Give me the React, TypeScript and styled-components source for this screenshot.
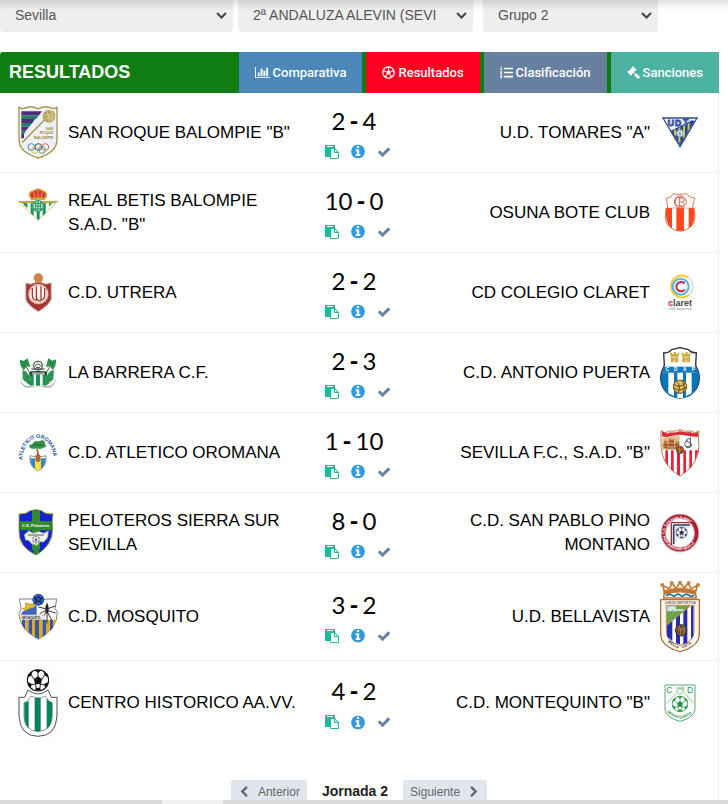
import React from "react";
import styled, { createGlobalStyle } from "styled-components";
import { FaListOl, FaRegFutbol } from "react-icons/fa";

const GlobalStyle = createGlobalStyle`
  *, *::before, *::after { box-sizing: border-box; }
  body {
    margin: 0;
    background: #fff;
    color: #000;
    font-family: "Liberation Sans", Arial, sans-serif;
  }
`;

const Page = styled.div`
  min-height: 100vh;
  display: flex;
  flex-direction: column;
`;

const TopShade = styled.div`
  position: fixed;
  inset: 0 0 auto 0;
  height: 10px;
  background: linear-gradient(rgba(0, 0, 0, 0.12), rgba(0, 0, 0, 0));
  pointer-events: none;
`;

const Filters = styled.form`
  display: grid;
  grid-template-columns: 233fr 240fr 175fr;
  gap: 5px;
  padding-right: 70px;
  margin-bottom: 20px;
`;

const FilterBox = styled.label<{ $gapEnd?: number }>`
  position: relative;
  display: block;
  margin-right: ${(p) => p.$gapEnd ?? 0}px;
`;

const FilterSelect = styled.select`
  appearance: none;
  display: block;
  width: 100%;
  height: 32px;
  padding: 0 36px 2px 15px;
  border: 0;
  border-radius: 0 0 4px 4px;
  background: #eee;
  color: #555;
  font: 14px "Liberation Sans", Arial, sans-serif;
`;

const FilterArrow = styled.svg`
  position: absolute;
  right: 6px;
  top: 12px;
  width: 11px;
  height: 7px;
  fill: none;
  stroke: #444;
  stroke-width: 2;
  pointer-events: none;
`;

const Panel = styled.main`
  flex: 1;
  display: flex;
  flex-direction: column;
  margin-right: 9px;
`;

const PanelHeader = styled.header`
  display: flex;
  height: 41px;
  background: #0f7d12;
  border-top-left-radius: 3px;
`;

const PanelTitle = styled.h1`
  flex: 1;
  margin: 0;
  padding-left: 9px;
  color: #fff;
  font-size: 18px;
  line-height: 40px;
`;

const Tabs = styled.nav`
  display: flex;
  gap: 4px;
`;

const Tab = styled.a<{ $color: string }>`
  display: flex;
  align-items: center;
  gap: 3px;
  padding: 0 16px;
  background: ${(p) => p.$color};
  color: #fff;
  font: 500 13px Roboto, sans-serif;
  text-decoration: none;
  white-space: nowrap;
`;

const PanelBody = styled.div`
  flex: 1;
  display: flex;
  flex-direction: column;
  border-right: 1px solid #eee;
`;

const MatchList = styled.ul`
  margin: 0;
  padding: 0;
  list-style: none;
`;

const MatchRow = styled.li`
  display: grid;
  grid-template-columns: 68px 1fr 110px 1fr 68px;
  align-items: center;
  min-height: 80px;
  padding: 8px 0;
  border-bottom: 1px solid #eee;
  &:last-child { border-bottom: 0; }
`;

const CrestCell = styled.div`
  display: flex;
  justify-content: center;
  width: 40px;
  margin: 0 auto 0 18px;
  svg { overflow: visible; }
`;

const CrestCellAway = styled(CrestCell)`
  margin-left: 10px;
`;

const TeamName = styled.div<{ $away?: boolean }>`
  font-size: 17px;
  line-height: 24px;
  text-align: ${(p) => (p.$away ? "right" : "left")};
`;

const ScoreCell = styled.div`
  display: flex;
  flex-direction: column;
  align-items: center;
  gap: 8px;
`;

const Score = styled.div`
  display: flex;
  gap: 4px;
  padding-right: 10px;
  font: 24px/30px Lato, sans-serif;
  b { font-weight: 900; }
`;

const Actions = styled.div`
  display: flex;
  gap: 10px;
  padding-right: 2px;
`;

const ActionButton = styled.button<{ $color: string }>`
  display: flex;
  align-items: center;
  justify-content: center;
  width: 16px;
  height: 16px;
  padding: 0;
  border: 0;
  background: none;
  color: ${(p) => p.$color};
  cursor: pointer;
`;

const Pager = styled.nav`
  display: flex;
  align-items: flex-start;
  justify-content: center;
  gap: 15px;
  margin-top: auto;
`;

const PagerButton = styled.button`
  display: flex;
  align-items: center;
  gap: 8px;
  height: 24px;
  padding: 0 7px;
  border: 0;
  border-radius: 3px 3px 0 0;
  background: #e1e6ee;
  color: #666;
  font: 12px "Liberation Sans", Arial, sans-serif;
`;

const PagerLabel = styled.strong`
  color: #222;
  font-size: 14px;
  line-height: 22px;
`;

const BottomTrack = styled.div`
  position: fixed;
  inset: auto 0 0 0;
  display: grid;
  grid-template-columns: 162fr 61fr 505fr;
  height: 4px;
  background: #dadada;
`;

const BottomGap = styled.span`
  grid-column: 2;
  background: #f1f1f1;
`;

type GlyphProps = { d: string; size: number; wide?: boolean };

const Glyph = ({ d, size, wide }: GlyphProps) => (
  <svg
    width={wide ? Math.round((size * 8) / 7) : size}
    height={size}
    viewBox={wide ? "0 0 2048 1792" : "0 0 1792 1792"}
    fill="currentColor"
    aria-hidden="true"
  >
    <path d={d} />
  </svg>
);

const CHART =
  "M640 896v512h-256v-512h256zm384-512v1024h-256v-1024h256zm1024 1152v128h-2048v-1536h128v1408h1920zm-640-896v768h-256v-768h256zm384-384v1152h-256v-1152h256z";
const GAVEL =
  "M1771 1536q0 53-37 90l-107 108q-39 37-91 37-53 0-90-37l-363-364q-38-36-38-90 0-53 43-96l-256-256-126 126q-14 14-34 14t-34-14q2 2 12.5 12t12.5 13 10 11.5 10 13.5 6 13.5 5.5 16.5 1.5 18q0 38-28 68-3 3-16.5 18t-19 20.5-18.5 16.5-22 15.5-22 9-26 4.5q-40 0-68-28l-408-408q-28-28-28-68 0-13 4.5-26t9-22 15.5-22 16.5-18.5 20.5-19 18-16.5q30-28 68-28 10 0 18 1.5t16.5 5.5 13.5 6 13.5 10 11.5 10 13 12.5 12 12.5q-14-14-14-34t14-34l348-348q14-14 34-14t34 14q-2-2-12.5-12t-12.5-13-10-11.5-10-13.5-6-13.5-5.5-16.5-1.5-18q0-38 28-68 3-3 16.5-18t19-20.5 18.5-16.5 22-15.5 22-9 26-4.5q40 0 68 28l408 408q28 28 28 68 0 13-4.5 26t-9 22-15.5 22-16.5 18.5-20.5 19-18 16.5q-30 28-68 28-10 0-18-1.5t-16.5-5.5-13.5-6-13.5-10-11.5-10-13-12.5-12-12.5q14 14 14 34t-14 34l-126 126 256 256q43-43 96-43 52 0 91 37l363 363q37 39 37 91z";
const PASTE =
  "M768 1664h896v-640h-416q-40 0-68-28t-28-68v-416h-384v1152zm256-1440v-64q0-13-9.5-22.5t-22.5-9.5h-704q-13 0-22.5 9.5t-9.5 22.5v64q0 13 9.5 22.5t22.5 9.5h704q13 0 22.5-9.5t9.5-22.5zm256 672h299l-299-299v299zm512 128v672q0 40-28 68t-68 28h-960q-40 0-68-28t-28-68v-160h-544q-40 0-68-28t-28-68v-1344q0-40 28-68t68-28h1088q40 0 68 28t28 68v328q21 13 36 28l408 408q28 28 48 76t20 88z";
const INFO =
  "M1152 1376v-160q0-14-9-23t-23-9h-96v-512q0-14-9-23t-23-9h-320q-14 0-23 9t-9 23v160q0 14 9 23t23 9h96v320h-96q-14 0-23 9t-9 23v160q0 14 9 23t23 9h448q14 0 23-9t9-23zm-128-896v-160q0-14-9-23t-23-9h-192q-14 0-23 9t-9 23v160q0 14 9 23t23 9h192q14 0 23-9t9-23zm640 416q0 209-103 385.5t-279.5 279.5-385.5 103-385.5-103-279.5-279.5-103-385.5 103-385.5 279.5-279.5 385.5-103 385.5 103 279.5 279.5 103 385.5z";
const CHECK =
  "M1671 566q0 40-28 68l-724 724-136 136q-28 28-68 28t-68-28l-136-136-362-362q-28-28-28-68t28-68l136-136q28-28 68-28t68 28l294 295 656-657q28-28 68-28t68 28l136 136q28 28 28 68z";
const CHEVRON_LEFT =
  "M1427 301l-531 531 531 531q19 19 19 45t-19 45l-166 166q-19 19-45 19t-45-19l-742-742q-19-19-19-45t19-45l742-742q19-19 45-19t45 19l166 166q19 19 19 45t-19 45z";
const CHEVRON_RIGHT =
  "M1363 877l-742 742q-19 19-45 19t-45-19l-166-166q-19-19-19-45t19-45l531-531-531-531q-19-19-19-45t19-45l166-166q19-19 45-19t45 19l742 742q19 19 19 45t-19 45z";

/* Every crest is drawn on a grid of three units per pixel. */
const Crest = ({ w, h, children }: { w: number; h: number; children: React.ReactNode }) => (
  <svg width={w} height={h} viewBox={`0 0 ${w * 3} ${h * 3}`} fill="none" aria-hidden="true">
    {children}
  </svg>
);

const Ball = ({ x, y, r, fill = "#fff", ink = "#111" }: { x: number; y: number; r: number; fill?: string; ink?: string }) => (
  <g transform={`translate(${x} ${y}) scale(${r / 30})`}>
    <circle r="29" fill={fill} stroke={ink} strokeWidth="3" />
    <path
      fill={ink}
      stroke={ink}
      strokeWidth="1"
      d="M0-11 11-3 7 10H-7L-11-3ZM-9-28H9L0-20ZM-28-8-18-14-16-24-26-17ZM28-8 18-14 16-24 26-17ZM-20 20-17 10-27 6-26 14ZM20 20 17 10 27 6 26 14ZM-8 27-5 21H5L8 27Z"
    />
    <path stroke={ink} strokeWidth="2.5" d="M0-11V-20M11-3 18-14M-11-3-18-14M7 10 17 12M-7 10-17 12M-5 21-7 10M5 21 7 10" />
  </g>
);

const SanRoque = () => (
  <Crest w={40} h={53}>
    <path d="M3 4Q14 11 24 5Q38 0 49 4L60 8L71 4Q84 0 96 5Q107 10 117 4V103Q116 139 61 156Q4 140 3 103Z" fill="#edf1f7" stroke="#a59446" strokeWidth="4" />
    <path d="M10 16H72L63 28H10ZM10 39H51L43 51H10ZM10 62H33L24 74H10ZM10 84H18V97H10Z" fill="#4f2c7a" />
    <path d="M10 28H63L54 39H10ZM10 51H43L34 62H10ZM10 74H24L18 84H10Z" fill="#28796b" />
    <path d="M106 15 12 110" stroke="#a59446" strokeWidth="4" />
    <circle cx="93" cy="31" r="19" fill="#b5a359" />
    <path d="M77 31Q92 19 110 33M80 41Q92 27 107 45M86 16Q97 31 93 49M98 13Q107 28 101 45" stroke="#ede4b9" strokeWidth="2" />
    <g fill="#9d8b43" fontFamily="Liberation Sans" fontWeight="700" fontSize="11">
      <text x="83" y="71">SAN</text><text x="65" y="85">ROQUE</text><text x="48" y="99">BALOMPIE</text>
    </g>
    <g strokeWidth="2.5">
      <circle cx="40" cy="123" r="10" stroke="#2b6cb5" /><circle cx="61" cy="123" r="10" stroke="#333" />
      <circle cx="82" cy="123" r="10" stroke="#d65049" /><circle cx="51" cy="132" r="10" stroke="#d9b346" />
      <circle cx="72" cy="132" r="10" stroke="#369558" />
    </g>
  </Crest>
);

const Betis = () => (
  <Crest w={40} h={49}>
    <path d="M1 40H119L60 97Z" fill="#fff" stroke="#c6a142" strokeWidth="2" />
    <path d="M12 42H28V60L20 53ZM38 42H47V84L38 75ZM56 42H65V92L60 96L56 90ZM74 42H83V75L74 84ZM93 42H106L93 56Z" fill="#169456" />
    <path d="M2 39H118L111 46H9Z" fill="#c1a54a" />
    <circle cx="60" cy="54" r="18" fill="#fff" />
    <circle cx="60" cy="54" r="16" fill="#ddf2df" stroke="#159455" strokeWidth="4" />
    <path d="M49 46H71M49 54H71M49 63H71M53 43V66M60 40V68M67 43V66" stroke="#159455" strokeWidth="3" />
    <path d="M41 34Q25 12 48 8Q60 0 72 8Q94 13 79 34Z" fill="#d83a2e" stroke="#cfa63d" strokeWidth="4" />
    <path d="M60 4V29M46 12Q52 20 49 30M74 12Q68 20 71 30" stroke="#e7c45a" strokeWidth="2" />
    <path d="M40 31Q60 25 80 31V37Q60 32 40 37Z" fill="#d1a941" />
    <path d="M60 0V7M56 3H64" stroke="#b98e2e" strokeWidth="2" />
  </Crest>
);

const Utrera = () => (
  <Crest w={27} h={39}>
    <circle cx="40" cy="15" r="14" fill="#d38245" />
    <path d="M3 31 18 34 40 27 63 34 78 30V78Q72 96 40 115Q8 96 3 78Z" fill="#a63632" stroke="#bd8067" strokeWidth="3" />
    <circle cx="40" cy="63" r="31" fill="#fff5f1" stroke="#a34340" strokeWidth="2" />
    <circle cx="40" cy="63" r="27" stroke="#cf8b79" strokeWidth="2" />
    <path d="M22 45V67Q23 83 34 81V45M34 40V70Q36 88 48 82V40M48 45V81Q60 79 59 64V45" stroke="#a93835" strokeWidth="4" />
  </Crest>
);

const Barrera = () => (
  <Crest w={38} h={30}>
    <path d="M9 34 33 24 57 8 82 23 106 33 101 56 110 69 97 86 71 88 57 78 43 88 17 86 4 73 14 55Z" fill="#fafbf9" stroke="#a2b3a2" strokeWidth="2" />
    <path d="M2 5 14 9 26 1 34 27 23 24 14 36 5 24ZM112 4 101 9 88 1 81 27 93 23 101 35 109 24Z" fill="#279149" />
    <path d="M11 8 50 76M104 6 64 76" stroke="#397847" strokeWidth="3" />
    <path d="M12 36Q24 40 29 52L43 58V82Q27 83 22 72Q7 70 12 36ZM103 35Q89 41 85 52L72 58V82Q88 84 92 72Q107 69 103 35Z" fill="#2d9252" />
    <path d="M31 38H83L77 84H38Z" fill="#fff" />
    <path d="M32 40H44V83H36ZM51 40H63V83H51ZM71 40H83L78 83H71Z" fill="#199254" />
    <circle cx="57" cy="23" r="13" fill="#fff" stroke="#526b55" strokeWidth="4" />
    <path d="M48 25 57 17 67 25M51 29H63M37 33H77" stroke="#333" strokeWidth="3" />
    <path d="M31 43Q57 35 84 43V53Q57 45 31 53Z" fill="#253c30" />
    <text x="39" y="51" fill="#fff" fontFamily="Liberation Sans" fontSize="8">BARRERA</text>
    <path d="M9 76Q20 94 42 82M105 76Q92 94 71 82" stroke="#919f92" strokeWidth="3" />
  </Crest>
);

const Oromana = () => (
  <Crest w={40} h={39}>
    <path id="oromanaArc" d="M13 81A47 66 0 0 1 107 81" />
    <text fill="#234e98" fontFamily="Liberation Sans" fontWeight="700" fontSize="16"><textPath href="#oromanaArc">ATLETICO OROMANA</textPath></text>
    <path d="M36 68Q46 73 60 69Q74 73 84 68V82Q82 103 60 114Q38 103 36 82Z" fill="#fff" stroke="#635f42" strokeWidth="2" />
    <path d="M37 76H51V108Q37 98 37 76ZM69 76H83Q82 99 69 108Z" fill="#3485c9" />
    <path d="M51 81H69V108L60 113 51 108Z" fill="#ffe034" />
    <path d="M57 47Q62 62 60 77" stroke="#96602d" strokeWidth="5" />
    <ellipse cx="60" cy="75" rx="8" ry="12" fill="#a46c31" />
    <path d="M35 44Q30 35 43 34Q48 21 63 25Q81 16 81 33Q90 43 76 44Q67 51 58 46Q46 50 35 44Z" fill="#3b914b" />
    <path d="M40 39Q56 30 70 38M49 31Q60 40 77 33" stroke="#247438" strokeWidth="3" />
  </Crest>
);

const Peloteros = () => (
  <Crest w={40} h={47}>
    <path d="M3 15Q25 16 36 5Q54-1 71 5Q84 17 105 14Q101 39 104 58Q105 110 54 138Q2 115 3 67Z" fill="#1724ce" stroke="#9dac20" strokeWidth="3" />
    <path d="M42 5H66V37H101V64H66V131L54 138L42 131V64H5V37H42Z" fill="#32892f" />
    <text x="12" y="53" fill="#fff" fontFamily="Liberation Sans" fontWeight="700" fontSize="12">C.D. Peloteros</text>
    <path d="M19 77 33 65 45 73 63 68 78 73 91 66 89 84 80 99 65 98 58 109 41 104 32 94 23 94Z" fill="#eef2e8" stroke="#a9b8a1" strokeWidth="2" />
    <path d="M29 78H78" stroke="#7a8389" strokeWidth="4" />
    <Ball x={54} y={92} r={11} ink="#666" />
    <path d="M23 95 38 114M85 94 70 114M31 112 47 130M78 112 63 128" stroke="#1724ce" strokeWidth="6" />
  </Crest>
);

const Mosquito = () => (
  <Crest w={40} h={47}>
    <path d="M4 18H38L60 27 84 18H116L111 47Q115 52 118 57Q119 107 61 139Q4 107 3 62L10 48Z" fill="#fff" stroke="#80836e" strokeWidth="3" />
    <path d="M12 80H22V111L12 96ZM31 80H42V126L31 118ZM51 80H63V137L51 132ZM73 80H84V124L73 131ZM95 80H105V105L95 115Z" fill="#3555ae" />
    <path d="M22 80H31V118L22 111ZM42 80H51V132L42 126ZM63 80H73V131L63 137ZM84 80H95V115L84 124ZM105 80H115L105 105Z" fill="#dba91d" />
    <path d="M15 55 56 36V65H8Z" fill="#3b65c3" />
    <path d="M22 30 42 34 50 29 48 44 34 46 21 54 14 46 24 44Z" fill="#eab928" stroke="#b1852b" strokeWidth="2" />
    <circle cx="61" cy="20" r="18" fill="#3158b5" />
    <path d="M61 11 68 17 65 25H56L53 17ZM47 14 53 17M68 17 76 14M56 25 50 32M65 25 72 32" stroke="#111" strokeWidth="3" />
    <path d="M87 30V91M87 48 61 42M87 51 65 62M87 48 111 39M87 52 113 60M88 57 101 81M85 57 70 79" stroke="#33352d" strokeWidth="3" />
    <ellipse cx="87" cy="48" rx="5" ry="14" fill="#252822" />
    <path d="M9 67H78V79H10Z" fill="#f3f3ee" stroke="#a38a48" strokeWidth="1" />
    <text x="13" y="77" fill="#222" fontFamily="Liberation Sans" fontWeight="700" fontSize="10">MOSQUITO</text>
  </Crest>
);

const Centro = () => (
  <Crest w={40} h={68}>
    <path d="M1 1H119V203H1Z" stroke="#f1f1f1" />
    <path d="M3 85H20L30 63Q44 74 60 75Q77 74 90 63L100 85H117V141Q114 201 60 202Q6 201 3 141Z" fill="#fff" stroke="#4a524d" strokeWidth="3" />
    <path d="M18 101 29 97 39 81Q61 92 82 81L92 97 103 101V143Q100 185 60 188Q20 185 18 143Z" fill="#fff" stroke="#427363" strokeWidth="2" />
    <path d="M19 102 32 96V178Q20 168 19 143ZM50 87H68V187Q60 188 50 186ZM86 90 102 102V143Q101 169 86 180Z" fill="#06835e" />
    <Ball x={60} y={34} r={33} />
  </Crest>
);

const Tomares = () => (
  <Crest w={36} h={31}>
    <path d="M3 3H105L54 89Z" fill="#f5f8ff" stroke="#304c9c" strokeWidth="4" />
    <path d="M25 42 90 10 98 12 55 85Z" fill="#284795" />
    <path d="M36 40 42 37V61L36 52ZM49 34 55 31V79L49 72ZM63 27 69 24V56L63 66ZM77 20 83 17V34L77 45Z" fill="#d5c841" />
    <g fill="#fff" stroke="#304c9c" strokeWidth="3" fontFamily="Liberation Sans" fontWeight="700" fontSize="26">
      <text x="17" y="26">U</text><text x="39" y="26">D</text><text x="63" y="24">T</text>
    </g>
    <Ball x={54} y={49} r={11} fill="#dce6f4" ink="#7993b5" />
  </Crest>
);

const Osuna = () => (
  <Crest w={32} h={39}>
    <path d="M7 16 20 12 28 2Q48 8 67 2L78 12 92 15 86 42Q95 54 93 76Q88 109 49 115Q8 109 4 76Q2 54 11 42Z" fill="#fff" stroke="#cd7b58" strokeWidth="3" />
    <path d="M5 45H24V106Q4 95 5 45ZM37 45H60V113H37ZM74 45H91Q95 93 74 106Z" fill="#ff461c" />
    <circle cx="49" cy="27" r="18" stroke="#cf765e" strokeWidth="3" />
    <path d="M55 13H40Q34 17 34 25V32Q35 41 45 39H55M46 14V39M46 15H58Q67 22 55 27H46M55 27Q68 34 56 40H46" stroke="#dc6650" strokeWidth="3" />
    <path d="M12 45H86" stroke="#cb7961" strokeWidth="2" />
  </Crest>
);

const Claret = () => (
  <Crest w={25} h={37}>
    <path d="M61 10A33 33 0 1 0 64 62" stroke="#f5c928" strokeWidth="6" />
    <path d="M62 11A32 32 0 0 1 64 61" stroke="#d2d5d6" strokeWidth="4" />
    <circle cx="38" cy="38" r="24" stroke="#51b8dc" strokeWidth="6" />
    <circle cx="38" cy="38" r="18" stroke="#e1e3e4" strokeWidth="3" />
    <path d="M50 29A14 14 0 1 0 50 47" stroke="#c42952" strokeWidth="6" />
    <text x="0" y="96" fill="#444" fontFamily="Liberation Sans" fontWeight="700" fontSize="27"><tspan fill="#c42952">c</tspan>laret</text>
    <text x="2" y="107" fill="#888" fontFamily="Liberation Sans" fontSize="11">club deportivo</text>
  </Crest>
);

const Puerta = () => (
  <Crest w={40} h={52}>
    <path d="M11 18Q25 19 35 8Q47 5 60 2Q73 5 85 8Q96 19 109 17L107 55Q116 72 118 88Q119 143 60 154Q1 143 2 88Q4 73 13 55Z" fill="#fff" stroke="#222f36" strokeWidth="4" />
    <path d="M8 76H118Q121 125 91 147Q60 160 29 147Q2 129 2 88Z" fill="#0874b9" />
    <path d="M25 77H42V147L25 139ZM52 77H69V154H52ZM78 77H95V139L78 147Z" fill="#fff" />
    <path d="M11 59H109L114 76H6Z" fill="#137abb" />
    <g fill="#fff" fontFamily="Liberation Sans" fontWeight="700" fontSize="14">
      <text x="17" y="73">C</text><text x="42" y="73">D</text><text x="69" y="73">A</text><text x="95" y="73">P</text>
    </g>
    <path d="M32 46V27L29 17H36V21H41V15H48V21H53V17H59L55 28V46ZM67 46V27L64 17H71V21H76V15H83V21H88V17H94L90 28V46Z" fill="#ceac47" />
    <path d="M35 31H52M71 31H87M43 38V46M79 38V46" stroke="#f8e9af" strokeWidth="3" />
    <circle cx="60" cy="119" r="20" fill="#e4c256" stroke="#635022" strokeWidth="3" />
    <path d="M42 112Q58 126 77 108M42 123Q57 137 78 120M50 103Q63 115 55 138M65 101Q79 116 69 136" stroke="#55451f" strokeWidth="3" />
  </Crest>
);

const Sevilla = () => (
  <Crest w={40} h={48}>
    <path d="M3 5Q15 15 28 6Q46 9 60 2Q74 10 92 6Q106 15 117 5Q113 25 117 49Q119 102 60 142Q3 105 3 51Z" fill="#fff" stroke="#a98555" strokeWidth="3" />
    <path d="M6 7Q20 18 31 10Q46 12 60 6Q77 12 90 9Q103 17 114 8V23Q96 24 87 21L60 17 33 21Q20 26 6 22Z" fill="#dc2937" />
    <path d="M16 64H24V111L16 97ZM33 64H41V128L33 121ZM51 64H60V140L51 135ZM70 64H78V129L70 134ZM88 64H96V112L88 121ZM105 64H115L105 96Z" fill="#e7223c" />
    <path d="M7 26 29 23 59 19V63H5Z" fill="#e2c493" />
    <path d="M12 33H23V57H10ZM27 28H42V53H25ZM46 35H57V60H46Z" fill="#bc7a39" />
    <circle cx="18" cy="32" r="5" fill="#e4b27e" /><circle cx="35" cy="28" r="5" fill="#e4b27e" /><circle cx="51" cy="34" r="5" fill="#e4b27e" />
    <path d="M9 48H58M15 57H58M28 37H42" stroke="#8e3632" strokeWidth="3" />
    <path d="M92 30Q77 27 79 38Q94 40 95 48Q92 59 78 54M91 25V53H77Q70 39 83 34" stroke="#555" strokeWidth="3" />
    <circle cx="60" cy="63" r="11" fill="#8e4c26" stroke="#503424" strokeWidth="2" />
    <path d="M52 59Q60 68 69 59M56 54Q62 63 58 72" stroke="#d69a60" strokeWidth="2" />
  </Crest>
);

const SanPablo = () => (
  <Crest w={38} h={40}>
    <circle cx="57" cy="60" r="50" fill="#fff" stroke="#a92234" strokeWidth="12" />
    <circle cx="57" cy="60" r="57" stroke="#df9da1" strokeWidth="2" /><circle cx="57" cy="60" r="43" stroke="#df9da1" strokeWidth="2" />
    <path id="sanPabloArc" d="M10 64A47 47 0 0 1 104 64" />
    <path id="sanPabloArcLow" d="M6 70A52 52 0 0 0 108 70" />
    <g fill="#fff" fontFamily="Liberation Sans" fontWeight="700" fontSize="10">
      <text><textPath href="#sanPabloArc">C.D. SAN PABLO PINO</textPath></text>
      <text><textPath href="#sanPabloArcLow">PINO MONTANO SEVILLA</textPath></text>
    </g>
    <path d="M31 29H89M31 29V96" stroke="#a52a3e" strokeWidth="4" />
    <path d="M38 36H87M38 36V94" stroke="#31365d" strokeWidth="5" />
    <path d="M46 42H85M45 42V89" stroke="#ccd1da" strokeWidth="3" />
    <Ball x={62} y={59} r={17} ink="#252e5b" />
  </Crest>
);

const Bellavista = () => (
  <Crest w={40} h={71}>
    <path d="M13 36 9 13 27 23 37 7 48 23 60 4 73 22 84 7 94 23 112 13 106 36 109 51H11Z" fill="#fff" stroke="#c37635" strokeWidth="5" />
    <path d="M12 28Q60 12 108 28L106 41Q60 28 14 41Z" fill="#c37635" />
    <g fill="#c98446"><circle cx="7" cy="12" r="6" /><circle cx="35" cy="6" r="6" /><circle cx="60" cy="5" r="6" /><circle cx="86" cy="6" r="6" /><circle cx="114" cy="12" r="6" /></g>
    <path d="M18 45 29 39 42 46 54 39 67 46 80 39 92 46 103 43" stroke="#2e78a0" strokeWidth="5" />
    <path d="M2 56H118V162Q115 197 60 212Q5 197 2 162Z" fill="#fffaf1" stroke="#b36d38" strokeWidth="4" />
    <path d="M19 73H102V154Q98 184 60 193Q22 184 19 154Z" fill="#fff" stroke="#c77e3c" strokeWidth="3" />
    <path d="M21 115 37 98V180L21 166ZM48 87 60 78V190L48 187ZM70 75H82V185L70 190ZM93 75H100V164L93 174Z" fill="#252db6" />
    <path d="M21 74H91L21 132Z" fill="#69a44e" />
    <path d="M21 75H48V91H21Z" fill="#bcd4dc" />
    <path d="M91 75 21 132" stroke="#cc8a34" strokeWidth="3" />
    <path d="M28 88 36 79 48 87H71" stroke="#e4efe5" strokeWidth="5" />
    <circle cx="63" cy="148" r="17" fill="#624c38" stroke="#412c20" strokeWidth="3" />
    <path d="M49 141Q63 153 77 140M57 133Q67 147 60 163M68 134Q77 147 70 162" stroke="#a5815c" strokeWidth="3" />
    <text x="15" y="68" fill="#6c655c" fontFamily="Liberation Sans" fontSize="10" fontWeight="700">UNION DEPORTIVA</text>
    <text x="23" y="184" fill="#333" fontFamily="Liberation Sans" fontSize="11" fontWeight="700" transform="rotate(32 23 184)">BELLA</text>
    <text x="67" y="203" fill="#333" fontFamily="Liberation Sans" fontSize="11" fontWeight="700" transform="rotate(-28 67 203)">VISTA</text>
  </Crest>
);

const Montequinto = () => (
  <Crest w={32} h={38}>
    <path d="M3 3H93V77Q87 103 48 112Q9 103 3 77Z" fill="#fbfffb" stroke="#5cac75" strokeWidth="3" />
    <path d="M9 58 38 26M88 58 62 27M37 16 43 9 49 16 56 7 59 18M40 25Q36 13 50 12Q60 14 58 25L46 32Z" stroke="#58a770" strokeWidth="2" />
    <g fill="#349450" fontFamily="Liberation Sans" fontSize="26"><text x="7" y="28">C</text><text x="69" y="28">D</text></g>
    <Ball x={48} y={60} r={24} ink="#269244" />
    <path id="montequintoArc" d="M10 84Q48 122 88 84" />
    <text fill="#279141" fontFamily="Liberation Sans" fontWeight="700" fontSize="11"><textPath href="#montequintoArc">MONTEQUINTO</textPath></text>
  </Crest>
);

type Match = {
  home: string;
  away: string;
  goals: [number, number];
  HomeCrest: () => React.JSX.Element;
  AwayCrest: () => React.JSX.Element;
};

const matches: Match[] = [
  { home: 'SAN ROQUE BALOMPIE "B"', away: 'U.D. TOMARES "A"', goals: [2, 4], HomeCrest: SanRoque, AwayCrest: Tomares },
  { home: 'REAL BETIS BALOMPIE S.A.D. "B"', away: "OSUNA BOTE CLUB", goals: [10, 0], HomeCrest: Betis, AwayCrest: Osuna },
  { home: "C.D. UTRERA", away: "CD COLEGIO CLARET", goals: [2, 2], HomeCrest: Utrera, AwayCrest: Claret },
  { home: "LA BARRERA C.F.", away: "C.D. ANTONIO PUERTA", goals: [2, 3], HomeCrest: Barrera, AwayCrest: Puerta },
  { home: "C.D. ATLETICO OROMANA", away: 'SEVILLA F.C., S.A.D. "B"', goals: [1, 10], HomeCrest: Oromana, AwayCrest: Sevilla },
  { home: "PELOTEROS SIERRA SUR SEVILLA", away: "C.D. SAN PABLO PINO MONTANO", goals: [8, 0], HomeCrest: Peloteros, AwayCrest: SanPablo },
  { home: "C.D. MOSQUITO", away: "U.D. BELLAVISTA", goals: [3, 2], HomeCrest: Mosquito, AwayCrest: Bellavista },
  { home: "CENTRO HISTORICO AA.VV.", away: 'C.D. MONTEQUINTO "B"', goals: [4, 2], HomeCrest: Centro, AwayCrest: Montequinto },
];

const Filter = ({ label, value, gapEnd }: { label: string; value: string; gapEnd?: number }) => (
  <FilterBox $gapEnd={gapEnd}>
    <FilterSelect aria-label={label} defaultValue={value}>
      <option>{value}</option>
    </FilterSelect>
    <FilterArrow viewBox="0 0 11 7" aria-hidden="true">
      <path d="M1 1 5.5 5.5 10 1" />
    </FilterArrow>
  </FilterBox>
);

export default function App() {
  return (
    <Page>
      <GlobalStyle />
      <Filters>
        <Filter label="Provincia" value="Sevilla" />
        <Filter label="Competición" value="2ª ANDALUZA ALEVIN (SEVILLA)" gapEnd={5} />
        <Filter label="Grupo" value="Grupo 2" />
      </Filters>
      <Panel>
        <PanelHeader>
          <PanelTitle>RESULTADOS</PanelTitle>
          <Tabs>
            <Tab href="#comparativa" $color="#4b87b9"><Glyph d={CHART} size={13} wide />Comparativa</Tab>
            <Tab href="#resultados" $color="#ff0020" aria-current="page"><FaRegFutbol size={13} />Resultados</Tab>
            <Tab href="#clasificacion" $color="#68809f"><FaListOl size={13} />Clasificación</Tab>
            <Tab href="#sanciones" $color="#4db2a2"><Glyph d={GAVEL} size={13} />Sanciones</Tab>
          </Tabs>
        </PanelHeader>
        <PanelBody>
          <MatchList>
            {matches.map(({ home, away, goals, HomeCrest, AwayCrest }) => (
              <MatchRow key={home}>
                <CrestCell><HomeCrest /></CrestCell>
                <TeamName>{home}</TeamName>
                <ScoreCell>
                  <Score><span>{goals[0]}</span><b>-</b><span>{goals[1]}</span></Score>
                  <Actions>
                    <ActionButton type="button" aria-label="Acta" $color="#1abc9c"><Glyph d={PASTE} size={14} /></ActionButton>
                    <ActionButton type="button" aria-label="Información" $color="#3498db"><Glyph d={INFO} size={17} /></ActionButton>
                    <ActionButton type="button" aria-label="Confirmado" $color="#677fa3"><Glyph d={CHECK} size={14} /></ActionButton>
                  </Actions>
                </ScoreCell>
                <TeamName $away>{away}</TeamName>
                <CrestCellAway><AwayCrest /></CrestCellAway>
              </MatchRow>
            ))}
          </MatchList>
          <Pager aria-label="Jornadas">
            <PagerButton type="button"><Glyph d={CHEVRON_LEFT} size={12} />Anterior</PagerButton>
            <PagerLabel>Jornada 2</PagerLabel>
            <PagerButton type="button">Siguiente<Glyph d={CHEVRON_RIGHT} size={12} /></PagerButton>
          </Pager>
        </PanelBody>
      </Panel>
      <TopShade />
      <BottomTrack><BottomGap /></BottomTrack>
    </Page>
  );
}
